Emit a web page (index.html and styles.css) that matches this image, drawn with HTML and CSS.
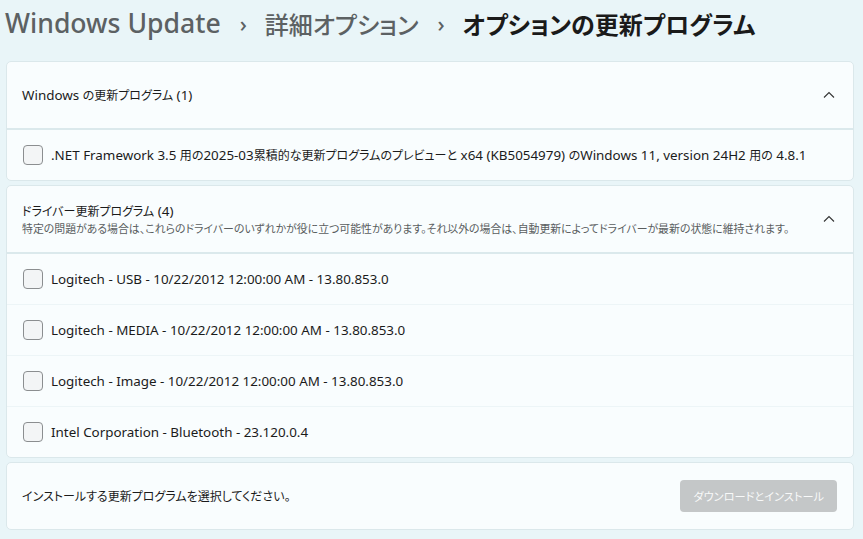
FILE: index.html
```html
<!DOCTYPE html>
<html lang="ja">
<head>
  <meta charset="UTF-8" />
  <meta name="viewport" content="width=device-width, initial-scale=1.0"/>
  <title>オプションの更新プログラム</title>
  <link rel="stylesheet" href="styles.css">
</head>
<body>
  <header class="crumbs">
    <span class="crumb">Windows Update</span>
    <span class="sep">&#x203A;</span>
    <span class="crumb jp">詳細オプション</span>
    <span class="sep">&#x203A;</span>
    <span class="crumb jp current">オプションの更新プログラム</span>
  </header>

  <main class="page">
    <section class="card">
      <div class="card-head">
        <div class="head-text">
          <div class="head-title">Windows <span class="ja">の更新プログラム</span> (1)</div>
        </div>
        <svg class="chevron" width="12" height="8" viewBox="0 0 12 8"><path d="M1 6.5 L6 1.5 L11 6.5" fill="none" stroke="#333" stroke-width="1.1"/></svg>
      </div>
      <ul class="items">
        <li class="item"><span class="box"></span><span>.NET Framework 3.5 <span class="ja">用の</span>2025-03<span class="ja">累積的な更新プログラムのプレビューと</span> x64 (KB5054979) <span class="ja">の</span>Windows 11, version 24H2 <span class="ja">用の</span> 4.8.1</span></li>
      </ul>
    </section>

    <section class="card">
      <div class="card-head">
        <div class="head-text">
          <div class="head-title"><span class="ja">ドライバー更新プログラム</span> (4)</div>
          <div class="head-sub">特定の問題がある場合は、これらのドライバーのいずれかが役に立つ可能性があります。それ以外の場合は、自動更新によってドライバーが最新の状態に維持されます。</div>
        </div>
        <svg class="chevron" width="12" height="8" viewBox="0 0 12 8"><path d="M1 6.5 L6 1.5 L11 6.5" fill="none" stroke="#333" stroke-width="1.1"/></svg>
      </div>
      <ul class="items">
        <li class="item"><span class="box"></span>Logitech - USB - 10/22/2012 12:00:00 AM - 13.80.853.0</li>
        <li class="item"><span class="box"></span>Logitech - MEDIA - 10/22/2012 12:00:00 AM - 13.80.853.0</li>
        <li class="item"><span class="box"></span>Logitech - Image - 10/22/2012 12:00:00 AM - 13.80.853.0</li>
        <li class="item"><span class="box"></span>Intel Corporation - Bluetooth - 23.120.0.4</li>
      </ul>
    </section>

    <section class="card footer-card">
      <span class="ja">インストールする更新プログラムを選択してください。</span>
      <button class="install-btn" type="button" disabled>ダウンロードとインストール</button>
    </section>
  </main>
</body>
</html>
```

FILE: styles.css
```css
html, body {
  margin: 0;
  padding: 0;
}

body {
  background-color: #e9f5f8;
  font-family: "Noto Sans", "Noto Sans CJK JP", sans-serif;
  font-feature-settings: "palt";
  color: #1b1b1b;
  font-size: 13.4px;
}

.ja {
  font-size: 12px;
}

.crumbs {
  display: flex;
  align-items: center;
  height: 46px;
  padding: 0 0 0 5px;
  font-size: 26.6px;
  font-weight: 500;
  color: #5c6163;
  white-space: nowrap;
}

.crumbs .jp {
  font-size: 24px;
}

.crumbs .sep {
  font-size: 22px;
  margin: 0 18px 0 19px;
  color: #5c6163;
}

.crumbs .current {
  color: #1a1a1a;
  font-weight: 600;
}

.page {
  display: flex;
  flex-direction: column;
  gap: 4px;
  padding: 15px 9px 0 6px;
}

.card {
  background-color: #f9fdfe;
  border: 1px solid #dbe8eb;
  border-radius: 5px;
}

.card-head {
  display: flex;
  align-items: center;
  justify-content: space-between;
  height: 66px;
  padding: 0 18px 0 15px;
  border-bottom: 2px solid #dbe9ec;
}

.head-title {
  line-height: 18px;
}

.head-sub {
  font-size: 10.9px;
  color: #5a5d5e;
  line-height: 15px;
}

.chevron {
  flex: none;
}

.items {
  list-style: none;
  margin: 0;
  padding: 0;
}

.item {
  display: flex;
  align-items: center;
  height: 50px;
  padding: 0 0 0 16px;
  border-top: 1px solid #edf5f7;
}

.item:first-child {
  border-top: none;
}

.box {
  flex: none;
  width: 18px;
  height: 18px;
  border: 1px solid #8b8e90;
  border-radius: 4px;
  background-color: #f3f5f6;
  margin-right: 8px;
}

.footer-card {
  display: flex;
  align-items: center;
  justify-content: space-between;
  height: 66px;
  padding: 0 16px 0 15px;
}

.install-btn {
  background-color: #c4c7c8;
  color: #f8f9f9;
  border: none;
  border-radius: 4px;
  height: 32px;
  padding: 0 13px;
  font-family: "Noto Sans", "Noto Sans CJK JP", sans-serif;
  font-feature-settings: "palt";
  font-size: 11.2px;
}
```
